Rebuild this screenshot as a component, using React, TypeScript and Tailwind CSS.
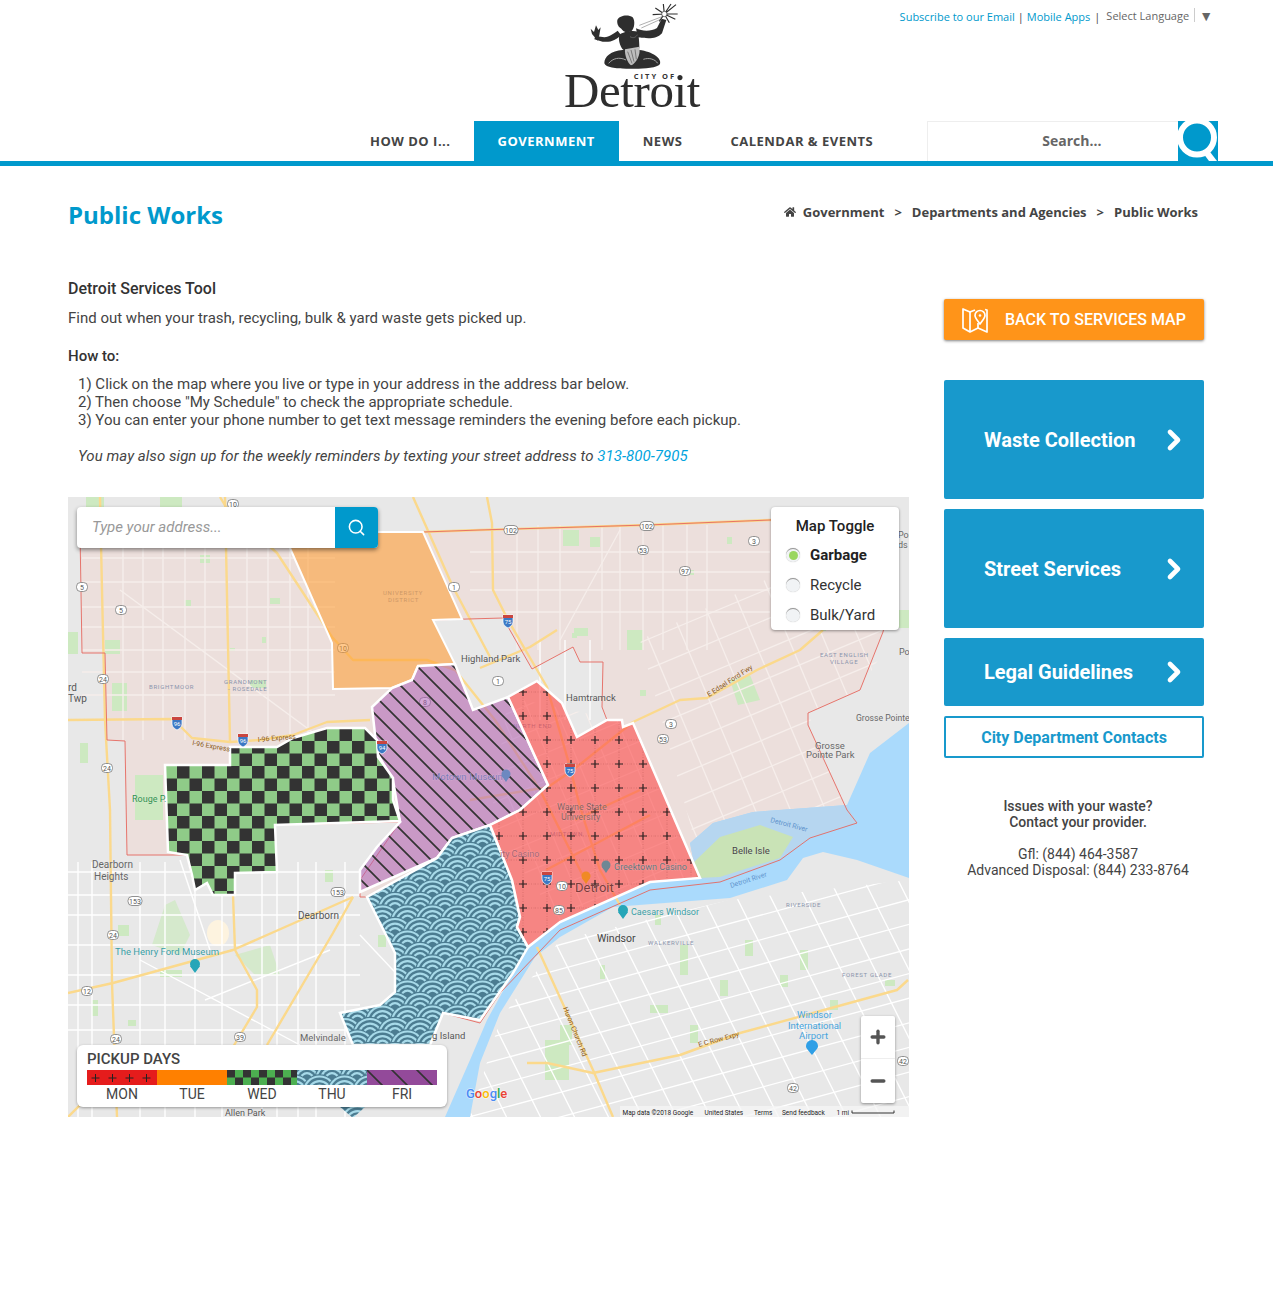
import { ChevronRight, Minus, Plus, Search } from 'lucide-react'
import { FaHome } from 'react-icons/fa'

type Line = number[]

// parallel streets: centre point, direction, step between streets, how many
const parallel = (x: number, y: number, dx: number, dy: number, ox: number, oy: number, n: number): Line[] => {
  const out: Line[] = []
  for (let i = -n; i <= n; i++) {
    out.push([x + i * ox - dx * 500, y + i * oy - dy * 500, x + i * ox + dx * 500, y + i * oy + dy * 500])
  }
  return out
}

const vertical = (xs: number[], y1: number, y2: number): Line[] => xs.map((x) => [x, y1, x, y2])
const horizontal = (ys: number[], x1: number, x2: number): Line[] => ys.map((y) => [x1, y, x2, y])

const westStreets = [
  ...vertical([123, 143, 163, 185, 205, 247, 268, 290, 308], 535, 740),
  ...horizontal([558, 582, 607, 627, 650, 672, 695], 82, 335),
  [120, 590, 330, 745],
]

const northStreets = [
  ...vertical([517, 538, 560, 602, 620, 643, 663, 687, 707], 525, 650),
  ...horizontal([552, 572, 590, 612], 470, 770),
  [620, 530, 560, 640],
]

const eastStreets = [
  ...parallel(740, 690, 1, -0.42, 9, 26, 9),
  ...parallel(740, 690, 0.42, 1, 30, -12, 8),
]

const centerStreets = [
  ...parallel(590, 790, 1, -0.42, 9, 24, 5),
  ...parallel(590, 790, 0.42, 1, 24, -10, 5),
]

const dearbornStreets = [
  ...vertical([78, 92, 140, 165, 195, 222, 262, 277, 298, 316, 345], 862, 1117),
  ...horizontal([872, 895, 915, 945, 975, 1005, 1030], 68, 360),
  [140, 960, 300, 1045],
  [205, 1000, 330, 950],
  [180, 860, 210, 950],
  [360, 935, 440, 1020],
]

const windsorStreets = [
  ...parallel(720, 1000, 1, -0.27, 6, 23, 8),
  ...parallel(720, 1000, 0.5, 1, 30, -8, 11),
]

const highways: string[] = [
  '68,720 173,719 192,738 230,742 260,740 293,735 327,722 370,720',
  '100,497 102,590 105,720 110,810 112,983 117,1117',
  '225,497 226,547 230,743',
  '220,497 226,507 277,553 332,637 353,660 427,660 455,670 495,720 540,790 570,850 585,880',
  '413,497 453,587 490,657',
  '423,532 480,530 647,525 770,520 880,516',
  '487,497 492,523 493,590 508,620 547,687 570,767 580,807 600,870 620,905',
  '480,668 530,647 557,630',
  '633,722 680,700 707,698 757,670 800,650 823,630',
  '633,722 573,770 548,787 470,800',
  '68,993 113,983 233,950 353,897',
  '233,895 235,950 257,990 257,1007 233,1047',
  '353,897 333,933 307,977 267,1045',
  '908,980 897,990 813,1013 740,1033 680,1055 593,1073 547,1063 527,1063',
  '537,947 593,1070 613,1117',
  '68,1117 90,1095',
  '575,820 640,790',
  '546,870 650,815',
]

const greens: number[][] = [
  [68, 632, 10, 22], [86, 497, 18, 14], [160, 497, 22, 16], [105, 640, 15, 14], [112, 683, 15, 28],
  [135, 775, 28, 45], [80, 743, 8, 20], [200, 555, 10, 8], [185, 600, 6, 6], [270, 598, 10, 6],
  [262, 637, 4, 6], [230, 648, 5, 3], [250, 680, 16, 8], [563, 530, 16, 16], [590, 537, 10, 10],
  [572, 633, 5, 5], [627, 630, 16, 20], [574, 628, 14, 8], [640, 690, 6, 6], [727, 537, 5, 7],
  [690, 570, 4, 5], [820, 625, 6, 6], [860, 820, 5, 12], [895, 610, 14, 18],
  [118, 925, 11, 11], [92, 1000, 6, 16], [128, 1020, 8, 6], [325, 870, 8, 12], [378, 935, 8, 12],
  [160, 970, 22, 7], [680, 945, 8, 30], [745, 940, 8, 16], [800, 950, 8, 20],
  [560, 1025, 12, 20], [545, 1040, 24, 40], [650, 1005, 18, 8], [690, 1025, 8, 18], [780, 975, 8, 12],
  [830, 1000, 8, 10], [720, 980, 8, 16], [600, 965, 5, 14], [655, 915, 6, 10], [885, 980, 10, 6],
]

const shields: [number, number, string][] = [
  [511, 530, '102'], [647, 526, '102'], [643, 550, '53'], [685, 571, '97'], [754, 541, '3'], [454, 587, '1'],
  [498, 681, '1'], [671, 724, '3'], [663, 739, '53'], [121, 610, '5'], [82, 587, '5'], [103, 679, '24'],
  [107, 768, '24'], [135, 901, '153'], [338, 892, '153'], [113, 935, '24'], [87, 991, '12'], [116, 1039, '24'],
  [240, 1037, '39'], [903, 1061, '42'], [793, 1088, '42'], [233, 504, '10'], [562, 886, '10'],
  [559, 910, '85'],
]

const interstates: [number, number, string][] = [
  [177, 723, '96'], [243, 740, '96'], [508, 621, '75'], [570, 770, '75'], [547, 878, '75'], [382, 747, '94'],
]

const labels: [number, number, string, number, string][] = [
  [461, 662, 'Highland Park', 9.5, '#555'],
  [566, 701, 'Hamtramck', 9.5, '#555'],
  [815, 749, 'Grosse', 9.5, '#666'],
  [806, 758, 'Pointe Park', 9.5, '#666'],
  [856, 721, 'Grosse Pointe', 8.6, '#666'],
  [92, 868, 'Dearborn', 10, '#666'],
  [94, 880, 'Heights', 10, '#666'],
  [298, 919, 'Dearborn', 10, '#555'],
  [115, 955, 'The Henry Ford Museum', 9.5, '#3a9ea5'],
  [300, 1041, 'Melvindale', 9.5, '#666'],
  [432, 1039, 'g Island', 9.5, '#555'],
  [732, 854, 'Belle Isle', 9.5, '#444'],
  [597, 942, 'Windsor', 10.5, '#444'],
  [631, 915, 'Caesars Windsor', 9, '#3a9ea5'],
  [614, 870, 'Greektown Casino', 9, '#66707a'],
  [500, 857, 'ity Casino', 9, '#a8606f'],
  [575, 892, 'Detroit', 13, '#7a3b3b'],
  [432, 780, 'Motown Museum', 9.5, '#7f79b8'],
  [557, 810, 'Wayne State', 9, '#8a5a5a'],
  [561, 820, 'University', 9, '#8a5a5a'],
  [132, 802, 'Rouge P.', 9, '#2f8f4f'],
  [68, 691, 'rd', 10, '#555'],
  [68, 702, 'Twp', 10, '#555'],
  [898, 538, 'Poi', 9, '#666'],
  [898, 548, 'ds', 9, '#666'],
  [899, 655, 'Po', 9, '#666'],
  [225, 1116, 'Allen Park', 9, '#555'],
  [797, 1018, 'Windsor', 9.5, '#46a3dc'],
  [788, 1029, 'International', 9.5, '#46a3dc'],
  [799, 1039, 'Airport', 9.5, '#46a3dc'],
]

const smallCaps: [number, number, string][] = [
  [149, 689, 'BRIGHTMOOR'],
  [224, 684, 'GRANDMONT'],
  [228, 691, '- ROSEDALE'],
  [820, 657, 'EAST ENGLISH'],
  [830, 664, 'VILLAGE'],
  [786, 907, 'RIVERSIDE'],
  [648, 945, 'WALKERVILLE'],
  [842, 977, 'FOREST GLADE'],
  [383, 595, 'UNIVERSITY'],
  [388, 602, 'DISTRICT'],
  [513, 728, 'NORTH END'],
  [550, 836, 'MIDTOWN'],
]

// route markers that sit under the purple and orange shading
const Shield = ({ x, y, text }: { x: number; y: number; text: string }) => (
  <g>
    <rect x={x - (text.length > 2 ? 7 : 5.5)} y={y - 4.5} width={text.length > 2 ? 14 : 11} height={9} rx={4} fill="#fff" stroke="#777" strokeWidth="0.8" />
    <text x={x} y={y + 2.5} fontSize="7" fill="#555" textAnchor="middle">{text}</text>
  </g>
)

const Interstate = ({ x, y, text }: { x: number; y: number; text: string }) => (
  <g>
    <path d={`M${x - 5} ${y - 6}h10v7c0 3-3 5-5 6c-2-1-5-3-5-6z`} fill="#3b78c4" stroke="#fff" strokeWidth="0.7" />
    <rect x={x - 5} y={y - 6} width={10} height={3} fill="#c9453f" />
    <text x={x} y={y + 3} fontSize="6" fill="#fff" textAnchor="middle">{text}</text>
  </g>
)

const Streets = ({ lines, color, width, clip }: { lines: Line[]; color: string; width: number; clip?: string }) => (
  <g stroke={color} strokeWidth={width} clipPath={clip}>
    {lines.map((l, i) => (
      <line key={i} x1={l[0]} y1={l[1]} x2={l[2]} y2={l[3]} />
    ))}
  </g>
)

const Wave = ({ x, y }: { x: number; y: number }) => (
  <g>
    <circle cx={x} cy={y} r={17.7} fill="#4b7c91" />
    <circle cx={x} cy={y} r={16.6} fill="#a7dae9" />
    <circle cx={x} cy={y} r={14.4} fill="#4b7c91" />
    <circle cx={x} cy={y} r={12} fill="#a7dae9" />
    <circle cx={x} cy={y} r={9.8} fill="#4b7c91" />
    <circle cx={x} cy={y} r={7.4} fill="#a7dae9" />
    <circle cx={x} cy={y} r={5.2} fill="#4b7c91" />
  </g>
)

const waveRows: [number, number][] = [
  [0, -12.5], [25, -12.5],
  [-12.5, 0], [12.5, 0], [37.5, 0],
  [0, 12.5], [25, 12.5],
  [-12.5, 25], [12.5, 25], [37.5, 25],
  [0, 37.5], [25, 37.5],
]

const detroit = '80,532 423,532 480,530 647,525 770,520 880,516 890,600 883,632 860,690 808,713 808,725 847,810 857,823 810,838 780,860 720,882 650,890 560,930 500,993 480,1023 443,1013 430,1045 353,1045 340,1013 380,1005 395,992 395,953 367,897 360,897 360,880 400,822 275,825 275,872 235,873 235,895 213,895 207,883 195,890 187,855 127,855 125,741 107,740 105,653 82,653'
const enclave = '433,620 503,618 532,669 573,647 580,662 603,662 602,707 607,720 577,737 562,703 537,681 508,697 473,710 455,664'
const water = '909,723 870,753 847,805 753,812 713,823 690,843 697,878 650,882 560,922 528,947 513,973 487,1020 470,1060 445,1117 470,1117 480,1063 500,1013 535,957 560,937 613,907 730,898 787,880 803,858 823,852 857,860 909,878'
const orangeZone = '290,548 332,643 333,689 392,688 412,680 418,666 455,664 433,620 462,619 423,532 378,532 300,532'
const purpleZone = '392,688 412,680 418,666 455,664 473,710 508,697 548,785 520,810 490,825 452,838 437,858 360,892 360,870 377,847 400,822 393,780 377,753 372,707'
const greenZone = '165,765 230,765 230,747 277,747 293,738 327,728 365,728 377,740 378,757 393,778 393,800 400,821 275,825 277,872 235,873 235,895 213,895 207,883 195,890 192,875 187,855 168,852'
const blueZone = '367,897 437,858 452,838 490,825 512,880 520,917 517,927 528,947 513,973 480,1020 443,1013 430,1045 353,1045 340,1013 380,1005 395,992 395,953'
const blueTail = '340,1107 365,1107 353,1118'
const redZone = '508,697 537,681 562,703 577,737 607,720 622,720 623,727 633,723 700,878 650,882 560,922 528,947 517,927 520,917 512,880 490,825 520,810 548,785'

const MapSvg = () => (
  <svg viewBox="68 497 841 620" className="block w-[841px] h-[620px]">
    <defs>
      <pattern id="cross" patternUnits="userSpaceOnUse" x="511" y="680" width="24" height="24">
        <rect width="24" height="24" fill="#ff3b3b" fillOpacity="0.55" />
        <path d="M12 0V24M0 12H24" stroke="#8a3030" strokeWidth="0.5" strokeDasharray="1 1.5" opacity="0.55" />
        <path d="M12 8V16M8 12H16" stroke="#2c2020" strokeWidth="1.2" />
      </pattern>
      <pattern id="checker" patternUnits="userSpaceOnUse" x="177" y="766" width="25" height="25">
        <rect width="25" height="25" fill="#8fcb88" />
        <rect width="12.5" height="12.5" fill="#333" />
        <rect x="12.5" y="12.5" width="12.5" height="12.5" fill="#333" />
      </pattern>
      <pattern id="stripes" patternUnits="userSpaceOnUse" x="68" y="497" width="18" height="18">
        <rect width="18" height="18" fill="#ad5fb4" fillOpacity="0.55" />
        <path d="M-4 -4L22 22M-4 14L4 22M14 -4L22 4" stroke="#333" strokeWidth="1.7" />
      </pattern>
      <pattern id="waves" patternUnits="userSpaceOnUse" x="70" y="497" width="25" height="25">
        <rect width="25" height="25" fill="#4b7c91" />
        {waveRows.map((w, i) => <Wave key={i} x={w[0]} y={w[1]} />)}
      </pattern>
      <clipPath id="eastClip"><polygon points="640,640 880,525 890,640 860,690 808,713 847,810 750,812 700,860" /></clipPath>
      <clipPath id="centerClip"><polygon points="508,697 633,723 700,878 560,922 490,825" /></clipPath>
      <clipPath id="windsorClip"><polygon points="500,1020 560,940 730,900 909,880 909,1117 470,1117" /></clipPath>
    </defs>

    <rect x="68" y="497" width="841" height="620" fill="#e8e8e8" />
    <polygon points={detroit} fill="#ecdfdc" />
    <polygon points={enclave} fill="#e8e8e8" />
    <polygon points="68,497 909,497 909,516 423,532 80,532 68,532" fill="#e8e8e8" />

    {greens.map((g, i) => (
      <rect key={i} x={g[0]} y={g[1]} width={g[2]} height={g[3]} fill="#cde9c1" />
    ))}
    <polygon points="152,945 165,905 175,900 190,935 180,955" fill="#cfe8c4" opacity="0.8" />
    <polygon points="235,955 270,945 280,975 255,975" fill="#cfe8c4" opacity="0.8" />
    <polygon points="730,680 750,675 760,700 738,705" fill="#cde9c1" />
    <ellipse cx="218" cy="933" rx="11" ry="13" fill="#fdf3df" />

    <Streets lines={westStreets} color="#f6eeeb" width={1.4} />
    <Streets lines={northStreets} color="#f6eeeb" width={1.3} />
    <Streets lines={eastStreets} color="#f6eeeb" width={1.3} clip="url(#eastClip)" />
    <Streets lines={centerStreets} color="#f6eeeb" width={1.2} clip="url(#centerClip)" />
    <Streets lines={dearbornStreets} color="#ffffff" width={1.4} />
    <Streets lines={windsorStreets} color="#ffffff" width={1.3} clip="url(#windsorClip)" />
    <Streets lines={vertical([540, 565, 590], 640, 720)} color="#ffffff" width={1.3} />

    <polygon points={water} fill="#aadafc" />
    <polygon points="847,805 753,812 713,823 690,843 697,878 720,882 780,860 810,838 857,823" fill="#b6d6f0" />
    <polygon points="693,863 720,837 760,825 793,837 780,858 720,877 697,878" fill="#c9e3b6" />

    {highways.map((h, i) => (
      <polyline key={i} points={h} fill="none" stroke="#fbd98c" strokeWidth={2.4} strokeLinejoin="round" />
    ))}

    <polygon points={detroit} fill="none" stroke="#e5685f" strokeWidth="0.9" />
    <polyline points={enclave} fill="none" stroke="#e5685f" strokeWidth="0.9" />

    {smallCaps.map((s, i) => (
      <text key={i} x={s[0]} y={s[1]} fontSize="6" letterSpacing="0.7" fill="#8b95ad">{s[2]}</text>
    ))}

    <Shield x={343} y={648} text="10" />
    <Shield x={425} y={702} text="8" />

    <polygon points={orangeZone} fill="#ff9a2e" fillOpacity="0.55" stroke="#fff" strokeWidth="2" />
    <polygon points={purpleZone} fill="url(#stripes)" stroke="#fff" strokeWidth="2.5" />
    <polygon points={greenZone} fill="url(#checker)" stroke="#fff" strokeWidth="2.5" />
    <polygon points={blueZone} fill="url(#waves)" stroke="#fff" strokeWidth="2.5" />
    <polygon points={blueTail} fill="url(#waves)" />
    <polygon points={redZone} fill="url(#cross)" stroke="#fff" strokeWidth="2.5" />

    {shields.map((s, i) => <Shield key={i} x={s[0]} y={s[1]} text={s[2]} />)}
    {interstates.map((s, i) => <Interstate key={i} x={s[0]} y={s[1]} text={s[2]} />)}

    {labels.map((l, i) => (
      <text key={i} x={l[0]} y={l[1]} fontSize={l[3]} fill={l[4]} stroke="#ffffff" strokeOpacity="0.35" strokeWidth="0.5" paintOrder="stroke">{l[2]}</text>
    ))}

    <text x="192" y="745" fontSize="7" fill="#8a5a20" transform="rotate(10 192 745)">I-96 Express</text>
    <text x="258" y="742" fontSize="7" fill="#8a5a20" transform="rotate(-5 258 742)">I-96 Express</text>
    <text x="709" y="697" fontSize="7" fill="#8a5a20" transform="rotate(-33 709 697)">E Edsel Ford Fwy</text>
    <text x="699" y="1047" fontSize="7" fill="#8a5a20" transform="rotate(-15 699 1047)">E C Row Expy</text>
    <text x="563" y="1008" fontSize="7" fill="#8a5a20" transform="rotate(68 563 1008)">Huron Church Rd</text>
    <text x="770" y="822" fontSize="7" fill="#5f93cc" transform="rotate(15 770 822)">Detroit River</text>
    <text x="731" y="888" fontSize="7" fill="#5f93cc" transform="rotate(-18 731 888)">Detroit River</text>

    <path d="M812 1055c-5-6-6-7-6-9a6 6 0 0 1 12 0c0 2-1 3-6 9z" fill="#2f9fe6" />
    <circle cx="195" cy="964" r="5" fill="#26a6b8" />
    <path d="M190 966l5 7l5-7z" fill="#26a6b8" />
    <circle cx="623" cy="910" r="5" fill="#26a6b8" />
    <path d="M618 912l5 7l5-7z" fill="#26a6b8" />
    <circle cx="586" cy="876" r="4.5" fill="#f08a24" />
    <path d="M582 878l4 6l4-6z" fill="#f08a24" />
    <circle cx="606" cy="865" r="4.5" fill="#6f8794" />
    <path d="M602 867l4 6l4-6z" fill="#6f8794" />
    <circle cx="506" cy="774" r="4.5" fill="#6d88c0" />
    <path d="M502 776l4 6l4-6z" fill="#6d88c0" />

    <text x="466" y="1098" fontSize="13" fontWeight="500" stroke="#fff" strokeOpacity="0.5" strokeWidth="1.5" paintOrder="stroke">
      <tspan fill="#4a8af4">G</tspan>
      <tspan fill="#ea4335">o</tspan>
      <tspan fill="#fbbc05">o</tspan>
      <tspan fill="#4a8af4">g</tspan>
      <tspan fill="#34a853">l</tspan>
      <tspan fill="#ea4335">e</tspan>
    </text>

    <rect x="620" y="1106" width="289" height="11" fill="#f5f5f5" fillOpacity="0.75" />
    <g fontSize="6.5" fill="#222">
      <text x="622.5" y="1114.5">Map data ©2018 Google</text>
      <text x="704.5" y="1114.5">United States</text>
      <text x="754" y="1114.5">Terms</text>
      <text x="782" y="1114.5">Send feedback</text>
      <text x="836.5" y="1114.5">1 mi</text>
    </g>
    <path d="M852 1110.5v2.5h42v-2.5" fill="none" stroke="#333" strokeWidth="1" />
  </svg>
)

const LegendBar = () => (
  <svg viewBox="0 0 350 15" className="block w-[350px] h-[15px]">
    <defs>
      <pattern id="lgCross" patternUnits="userSpaceOnUse" x="0" y="0" width="17" height="15">
        <rect width="17" height="15" fill="#e51c1c" />
        <path d="M8.5 4V12M4.5 8H12.5" stroke="#222" strokeWidth="1" />
      </pattern>
      <pattern id="lgChecker" patternUnits="userSpaceOnUse" x="140" y="0" width="16" height="15">
        <rect width="16" height="15" fill="#4caf50" />
        <rect width="8" height="7.5" fill="#333" />
        <rect x="8" y="7.5" width="8" height="7.5" fill="#333" />
      </pattern>
      <pattern id="lgStripes" patternUnits="userSpaceOnUse" x="280" y="0" width="25" height="25">
        <rect width="25" height="25" fill="#934a9a" />
        <path d="M-5 -5L30 30M-5 20L5 30M20 -5L30 5" stroke="#333" strokeWidth="1.6" />
      </pattern>
    </defs>
    <rect x="0" width="70" height="15" fill="url(#lgCross)" />
    <rect x="70" width="70" height="15" fill="#ff8000" />
    <rect x="140" width="70" height="15" fill="url(#lgChecker)" />
    <rect x="210" width="70" height="15" fill="url(#waves)" />
    <rect x="280" width="70" height="15" fill="url(#lgStripes)" />
  </svg>
)

const Radio = ({ label, active }: { label: string; active?: boolean }) => (
  <div className="flex items-center h-[30px]">
    <span className="w-[14px] h-[14px] rounded-full bg-[#f1f3f5] border-t border-t-[#999] shadow-[0_0_1px_rgba(0,0,0,0.3)] flex items-center justify-center ml-[15px] mr-[10px]">
      {active ? <span className="w-[9px] h-[9px] rounded-full bg-[#9ad65f]" /> : null}
    </span>
    <span className={active ? 'text-[15px] font-bold text-[#222]' : 'text-[15px] text-[#333]'}>{label}</span>
  </div>
)

const ServiceCard = ({ text, tall }: { text: string; tall?: boolean }) => (
  <div className={`${tall ? 'h-[119px]' : 'h-[68px]'} bg-[#1899cc] rounded-[2px] flex items-center justify-between pl-[40px] pr-[14px] text-white`}>
    <span className="text-[20px] font-bold">{text}</span>
    <ChevronRight size={32} strokeWidth={3.5} />
  </div>
)

const Logo = () => (
  <div className="w-[138px] ml-[563px] flex flex-col items-center">
    <svg viewBox="99 9 276 201" className="block w-[92px] h-[67px] mt-[3px] ml-[6px]">
      <g fill="#2e2e2e">
        <path d="M145 190C145 170 165 152 200 150L250 150C290 155 318 175 312 192C305 205 250 207 225 206C190 207 150 205 145 190Z" />
        <path d="M190 105C185 120 195 150 207 152L250 145C250 125 248 105 245 95C230 90 200 95 190 105Z" />
        <path d="M184 60C190 45 218 42 230 52C238 62 236 85 226 94C212 100 200 94 196 86C188 82 182 72 184 60Z" />
        <path d="M240 85C260 95 285 95 303 84L317 56L331 60L318 100C300 120 270 115 245 112Z" />
        <path d="M195 105C180 120 165 128 140 125L115 118L118 108L145 112C160 110 175 100 185 92Z" />
        <path d="M125 122L108 102L104 86L114 96L120 76L127 90L134 82L130 106Z" />
      </g>
      <path d="M207 148C205 165 215 190 225 196C240 190 255 165 250 140Z" fill="#bdbdbd" />
      <path d="M215 155L228 190M225 150L234 185M237 148L241 178" stroke="#555" strokeWidth="2" fill="none" />
      <path d="M158 190C170 175 190 170 210 180M262 178C280 172 298 178 305 190" stroke="#a5a5a5" strokeWidth="3" fill="none" />
      <path d="M250 76L318 50M256 84L318 56" stroke="#888" strokeWidth="2" fill="none" />
      <path d="M222 110C232 116 240 112 244 104" stroke="#777" strokeWidth="2" fill="none" />
      <g stroke="#2e2e2e" strokeWidth="3.5">
        <path d="M325 42L360 14M325 42L345 12M325 42L322 12M325 42L365 42M325 42L358 58M325 42L340 68M325 42L298 24M325 42L290 44M325 42L310 64" />
      </g>
      <circle cx="325" cy="42" r="8" fill="#fff" stroke="#2e2e2e" strokeWidth="2" />
    </svg>
    <div className="font-['Open_Sans',sans-serif] font-bold text-[7.5px] leading-[8px] tracking-[2px] text-[#333] mt-[2px] ml-[46px]">CITY OF</div>
    <div className="font-['Liberation_Serif',serif] text-[49px] leading-[34px] tracking-[-0.4px] text-[#2e2e2e] whitespace-nowrap -mt-[6px]">Detroit</div>
  </div>
)

const Header = () => (
  <header className="font-['Open_Sans',sans-serif] border-b-[5px] border-[#0099cc]">
    <div className="h-[121px] flex justify-between">
      <Logo />
      <div className="flex items-start pt-[8px] pr-[60px] text-[11px] text-[#0099cc] whitespace-nowrap">
        <span className="mt-[1px]">Subscribe to our Email</span>
        <span className="mt-[1px] mx-[3px] text-[#444]">|</span>
        <span className="mt-[1px]">Mobile Apps</span>
        <span className="mt-[1px] ml-[4px] text-[#444]">|</span>
        <span className="ml-[6px] text-[#666]">Select Language</span>
        <span className="w-px h-[14px] bg-[#ccc] ml-[5px]" />
        <span className="ml-[4px] text-[#666] text-[14px] leading-[15px]">▼</span>
      </div>
    </div>
    <div className="h-[40px] flex pl-[346px] text-[13px] font-bold tracking-[0.5px] text-[#444]">
      <a className="pl-[24px] pr-[23px] pt-[1px] flex items-center">HOW DO I...</a>
      <a className="px-[24px] pt-[1px] flex items-center bg-[#0099cc] text-white">GOVERNMENT</a>
      <a className="px-[24px] pt-[1px] flex items-center">NEWS</a>
      <a className="px-[24px] pt-[1px] flex items-center">CALENDAR &amp; EVENTS</a>
      <div className="ml-[30px] w-[251px] border-t border-l border-[#eee] flex items-center pl-[114px] pb-[2px] text-[14px] tracking-normal text-[#666]">Search...</div>
      <div className="w-[40px] h-[40px] bg-[#0099cc] overflow-hidden">
        <svg viewBox="0 0 40 40" className="block w-[40px] h-[40px]">
          <path d="M25 32L29 27L39 40H31z" fill="#fff" />
          <circle cx="19" cy="16.5" r="17" fill="#0099cc" stroke="#fff" strokeWidth="6" />
        </svg>
      </div>
    </div>
  </header>
)

const App = () => {
  return (
    <div className="min-h-[1295px] bg-white font-['Roboto',sans-serif] text-[#444]">
      <Header />

      <div className="h-[100px] pl-[68px] pr-[75px] pt-[32px] flex justify-between items-start">
        <h1 className="font-['Open_Sans',sans-serif] font-bold text-[24px] leading-[34px] text-[#0099cc]">Public Works</h1>
        <div className="font-['Open_Sans',sans-serif] font-bold text-[13px] leading-[26px] text-[#444] flex items-center whitespace-nowrap mt-[1px]">
          <FaHome size={12} className="mr-[7px]" />
          <span>Government</span>
          <span className="mx-[10px]">&gt;</span>
          <span>Departments and Agencies</span>
          <span className="mx-[10px]">&gt;</span>
          <span>Public Works</span>
        </div>
      </div>

      <div className="flex items-start">
        <div className="w-[909px] pl-[68px] shrink-0">
          <h2 className="text-[16px] leading-[24px] font-medium text-[#333] mt-[11px]">Detroit Services Tool</h2>
          <p className="text-[15px] leading-[24px] mt-[5px]">Find out when your trash, recycling, bulk &amp; yard waste gets picked up.</p>
          <p className="text-[15px] leading-[24px] font-medium text-[#333] mt-[14px]">How to:</p>
          <ol className="text-[15px] leading-[18px] pl-[10px] mt-[7px]">
            <li>1) Click on the map where you live or type in your address in the address bar below.</li>
            <li>2) Then choose "My Schedule" to check the appropriate schedule.</li>
            <li>3) You can enter your phone number to get text message reminders the evening before each pickup.</li>
          </ol>
          <p className="text-[15px] leading-[18px] italic tracking-[0.05px] pl-[10px] mt-[18px]">
            You may also sign up for the weekly reminders by texting your street address to <span className="text-[#00a3dd]">313-800-7905</span>
          </p>

          <div className="relative mt-[32px] -ml-px w-[842px] h-[620px] overflow-hidden pl-px">
            <MapSvg />

            <div className="absolute left-[10px] top-[10px] w-[301px] h-[41px] bg-white rounded-[4px] shadow-[0_2px_4px_rgba(0,0,0,0.45)] flex overflow-hidden">
              <div className="flex-1 pl-[15px] flex items-center italic text-[15px] text-[#999]">Type your address...</div>
              <div className="w-[43px] bg-[#0099cc] flex items-center justify-center text-white">
                <Search size={19} strokeWidth={2} />
              </div>
            </div>

            <div className="absolute left-[704px] top-[10px] w-[128px] h-[123px] bg-white rounded-[4px] shadow-[0_1px_3px_rgba(0,0,0,0.4)] pt-[8px]">
              <div className="text-[15px] leading-[22px] font-medium text-[#222] text-center">Map Toggle</div>
              <div className="mt-[3px]">
                <Radio label="Garbage" active />
                <Radio label="Recycle" />
                <Radio label="Bulk/Yard" />
              </div>
            </div>

            <div className="absolute left-[10px] top-[548px] w-[370px] h-[62px] bg-white rounded-[6px] shadow-[0_1px_3px_rgba(0,0,0,0.35)] px-[10px] pt-[5px]">
              <div className="text-[15px] leading-[18px] font-medium text-[#444]">PICKUP DAYS</div>
              <div className="mt-[2px]"><LegendBar /></div>
              <div className="grid grid-cols-5 text-center text-[14px] leading-[18px]">
                <span>MON</span>
                <span>TUE</span>
                <span>WED</span>
                <span>THU</span>
                <span>FRI</span>
              </div>
            </div>

            <div className="absolute left-[794px] top-[519px] w-[34px] h-[87px] bg-white rounded-[2px] shadow-[0_1px_3px_rgba(0,0,0,0.4)] flex flex-col text-[#555]">
              <div className="h-[43px] flex items-center justify-center border-b border-[#eee]"><Plus size={20} strokeWidth={4} /></div>
              <div className="flex-1 flex items-center justify-center"><Minus size={20} strokeWidth={4} /></div>
            </div>
          </div>
        </div>

        <aside className="w-[260px] ml-[35px] shrink-0">
          <div className="h-[41px] mt-[33px] bg-[#ff9419] rounded-[2px] shadow-[0_1px_3px_rgba(0,0,0,0.5)] flex items-center pl-[18px] text-white">
            <svg viewBox="0 0 26 26" className="w-[26px] h-[26px]" fill="none" stroke="#fff" strokeWidth="1.7" strokeLinejoin="round">
              <path d="M13 3L8 5L1 2V21L8 25L16 21L25 25V3L23 2.5" />
              <path d="M8 5V25M16 16V21" />
              <path d="M18 17C14.500 12.500 13 10.500 13 8.500A5 5 0 0 1 23 8.500C23 10.500 21.500 12.500 18 17Z" />
              <circle cx="18" cy="8.500" r="1.300" fill="#fff" stroke="none" />
            </svg>
            <span className="ml-[17px] text-[16px] font-medium">BACK TO SERVICES MAP</span>
          </div>

          <div className="mt-[40px] flex flex-col gap-[10px]">
            <ServiceCard text="Waste Collection" tall />
            <ServiceCard text="Street Services" tall />
            <ServiceCard text="Legal Guidelines" />
            <div className="h-[42px] pt-[1px] border-2 border-[#1899cc] rounded-[2px] flex items-center justify-center text-[16px] font-bold text-[#1899cc]">City Department Contacts</div>
          </div>

          <div className="mt-[40px] pl-[8px] text-center text-[14px] leading-[16px] text-[#444] whitespace-nowrap">
            <p className="font-medium">Issues with your waste?</p>
            <p className="font-medium">Contact your provider.</p>
            <p className="mt-[16px]">Gfl: (844) 464-3587</p>
            <p>Advanced Disposal: (844) 233-8764</p>
          </div>
        </aside>
      </div>
    </div>
  )
}

export default App
